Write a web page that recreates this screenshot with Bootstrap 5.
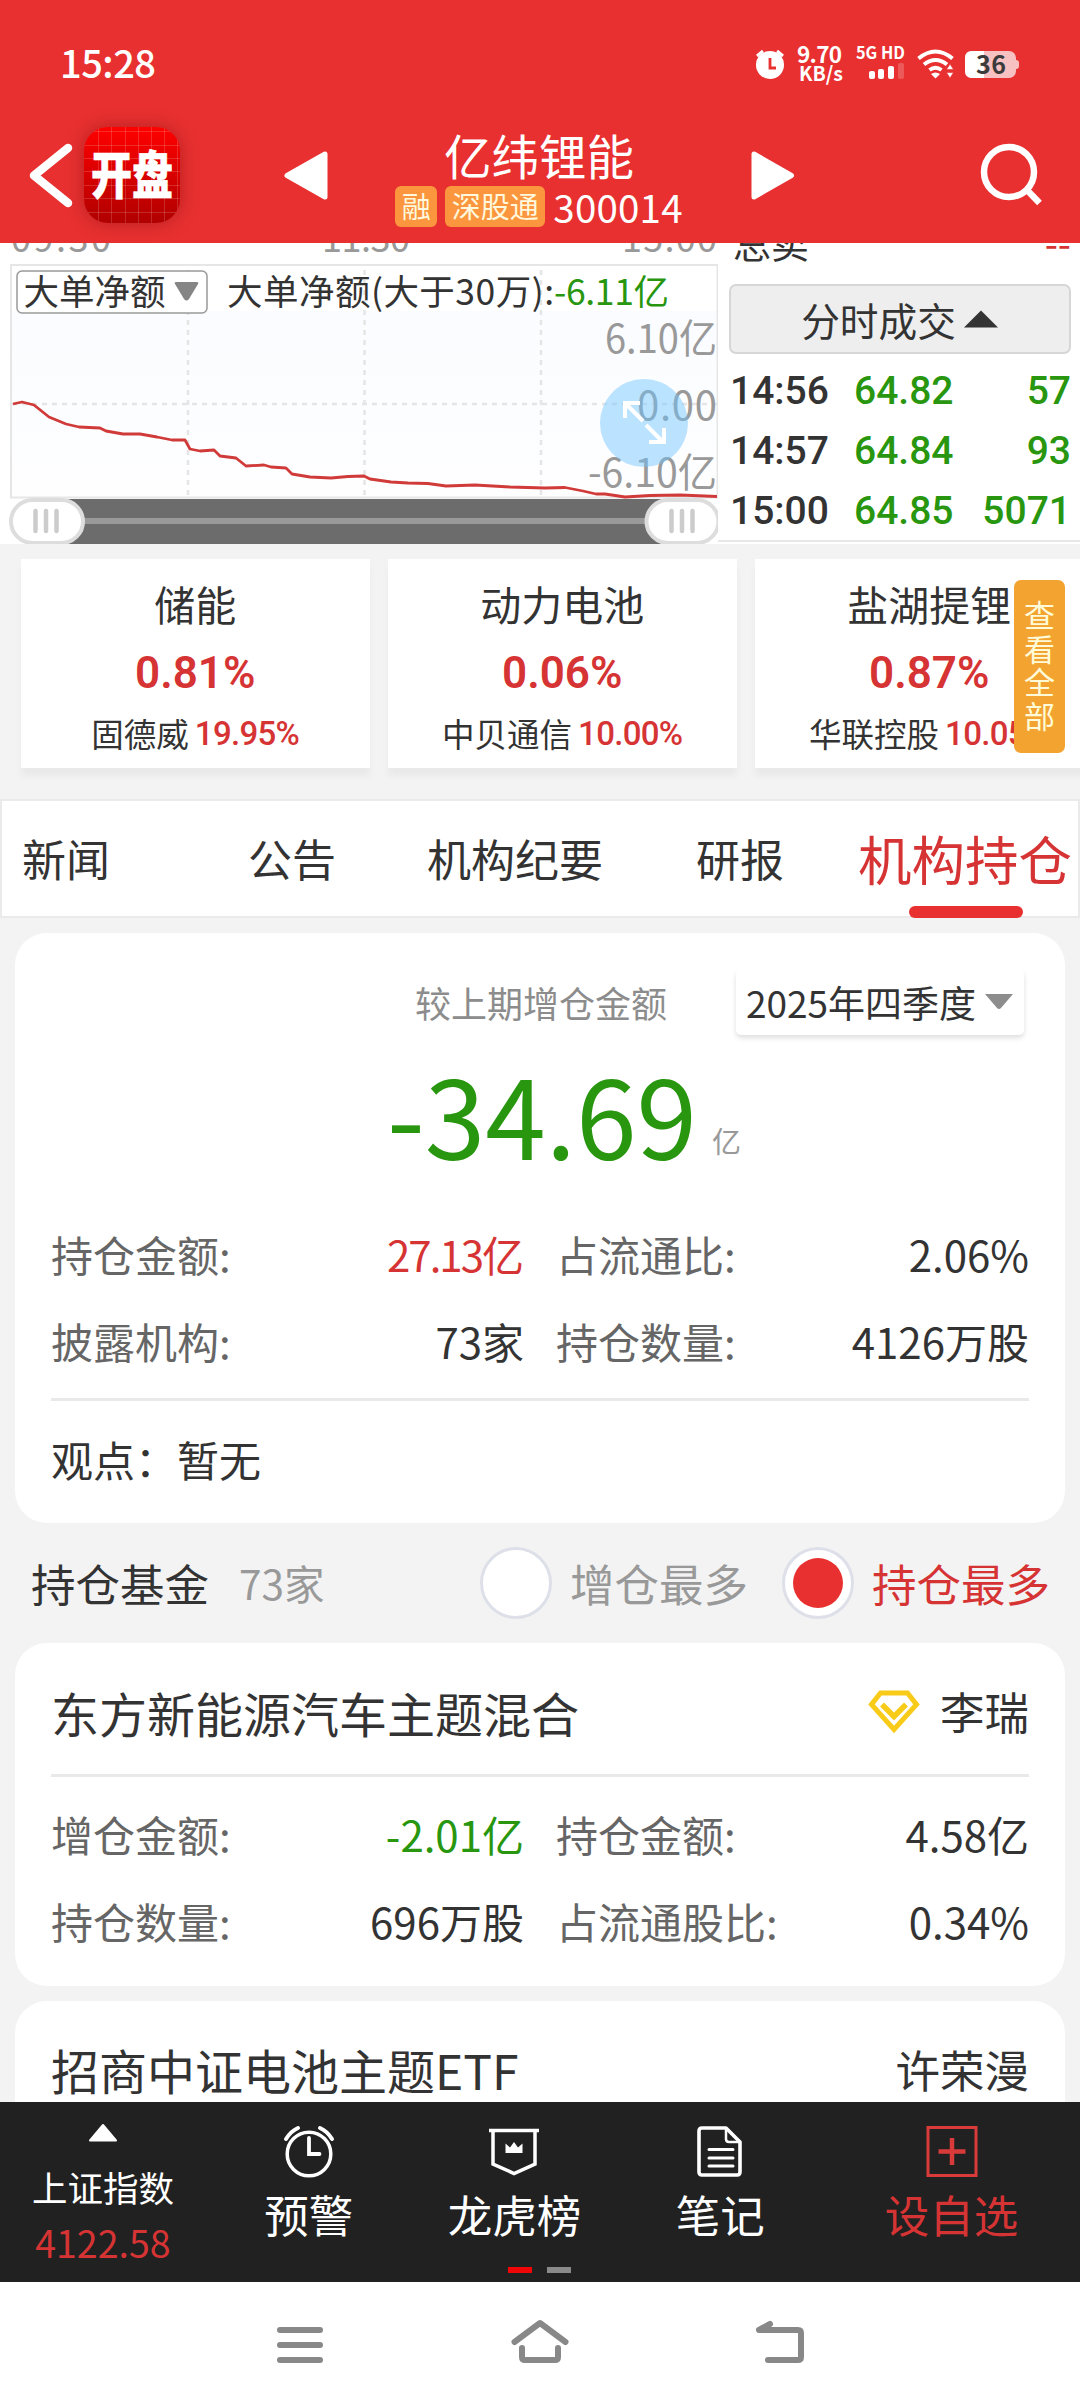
<!DOCTYPE html>
<html lang="zh-CN">
<head>
<meta charset="utf-8">
<meta name="viewport" content="width=device-width, initial-scale=1">
<title>亿纬锂能 300014</title>
<link href="https://cdn.jsdelivr.net/npm/bootstrap@5.3.0/dist/css/bootstrap.min.css" rel="stylesheet">
<style>
:root{--ink:#333;--up:#d63434;--down:#28960f;--brand:#e83030}
body{width:1080px;height:2408px;overflow:hidden;background:#f3f3f3;color:var(--ink);font-family:"Noto Sans CJK SC",sans-serif;line-height:1}
svg{display:block;flex:none}
.din{font-family:Roboto,"Noto Sans CJK SC",sans-serif}
.up{color:var(--up)}.down{color:var(--down)}
.app-head{height:243px;background:var(--brand)}
.status{height:127px;padding:0 60px 0 60px}
.clock{font-family:"Noto Sans CJK SC";font-weight:500;font-size:38px;width:110px;margin-top:-4px;letter-spacing:-.5px}
.titlebar{height:116px}
.app-ico{width:96px;height:96px;border-radius:24px;box-shadow:0 0 18px rgba(90,0,0,.35);background:
 repeating-linear-gradient(90deg,transparent 0 12.2px,rgba(255,255,255,.16) 12.2px 13.2px) 2px 0,
 repeating-linear-gradient(0deg,transparent 0 12.4px,rgba(255,255,255,.16) 12.4px 13.4px) 0 2px,
 linear-gradient(#f00,#e00000 40%,#b00000)}
.app-ico span{font-size:41px;font-weight:900;transform:scaleY(1.24);margin-top:-5px;-webkit-text-stroke:.5px #fff}
.stock-name{font-size:47.5px;height:50px}
.codes{margin-top:5px}
.tag{background:#fb963f;color:#fff8dc;border-radius:6px;height:41px;font-size:29px;padding:0 6.5px 3px}
.code{font-size:38.5px;letter-spacing:.2px}
.quote{height:301px;background:#fff}
.trades{width:362px;height:299px;border-bottom:2px solid #e8e8e8;padding:0 9px 0 11px}
.sell{height:41px;font-size:38px;overflow:hidden}
.sell span{margin-top:-20px}
.fs-btn{height:70px;background:#eee;border:2px solid #d6d6d6;border-radius:7px;font-size:38.7px}
.trade-list{padding-top:7px}
.trade{height:60px;font-size:39px;font-weight:500}
.trade span:first-child{width:121px;padding-left:1px}
.sectors{height:255px;padding:15px 0 0 21px;gap:18.5px;overflow:hidden}
.sector{width:348.5px;height:209px;background:#fff;box-shadow:0 8px 7px rgba(0,0,0,.045);flex:none}
.sector .nm{font-size:41px;margin-top:24px}
.sector .pc{font-size:44px;font-weight:600;margin-top:27px}
.sector .ld{font-size:32.5px;margin-top:22px;gap:6px}
.sector .ld .din{font-size:33px;font-weight:500;letter-spacing:-.7px}
.view-all{right:15px;top:36px;width:51px;height:173px;background:#f3a32f;color:#fffbd8;border-radius:7px;font-size:31px;line-height:33.5px;padding-top:17px;text-align:center}
.tabs{height:119px;background:#fff;border:2px solid #eaeaea;font-size:44px;padding-left:20px}
.tabs span{line-height:114px;white-space:nowrap;flex:none}
.tabs .on{font-size:53.5px;color:var(--up)}
.tabs .on::after{content:"";position:absolute;left:51px;bottom:-2px;width:114px;height:12px;border-radius:6px;background:var(--brand)}
.panel{background:#fff;border-radius:32px;margin:0 15px;padding:0 36px}
.lbl{color:#666}
.kv{font-size:42px;height:87px}
.kv>div{width:473px}
.tight{letter-spacing:-2px}
.line{height:2.5px;background:#e9e9e9}
.period{width:288px;height:66px;font-size:37px;border-radius:5px;box-shadow:0 3px 5px rgba(0,0,0,.13);clip-path:inset(0 -8px -8px -8px)}
.big{font-size:109px;margin-bottom:-5px}
.radio{width:72px;height:72px;border:3px solid #dde0e8;background:#fff}
.radio i{width:50px;height:50px;background:var(--brand)}
.fund-bar{height:120px;font-size:44.5px;padding:0 30px 0 31px}
.fund-name{font-size:48px}
.mgr{font-size:44.5px}
.dock{height:180px;background:#212121;color:#fff;font-size:44.5px}
.dock>div{width:205.8px}
.dock .wide{width:257px}
.sys{height:126px;background:#fff}
</style>
<script src="https://cdn.jsdelivr.net/npm/bootstrap@5.3.0/dist/js/bootstrap.bundle.min.js"></script>
</head>
<body class="d-flex flex-column">
<header class="app-head text-white flex-shrink-0">
  <div class="status d-flex align-items-center">
    <span class="clock">15:28</span>
    <svg class="ms-auto" width="268" height="60" viewBox="753 35 268 60" fill="#fff" font-family="Noto Sans CJK SC" font-weight="700">
      <circle cx="771" cy="66" r="14"/><path d="M758 57l6-5M784 57l-6-5" stroke="#fff" stroke-width="3"/><path d="M771 59v10h6" fill="none" stroke="#e83030" stroke-width="2.8"/>
      <text x="798" y="63.500" font-size="22.500" textLength="45">9.70</text><text x="800" y="82" font-size="20" textLength="44" lengthAdjust="spacingAndGlyphs">KB/s</text>
      <text x="857" y="60" font-size="17" textLength="49" lengthAdjust="spacingAndGlyphs">5G HD</text>
      <rect x="870" y="72" width="6" height="8" rx="2"/><rect x="879" y="70" width="6" height="10" rx="2"/><rect x="889" y="67" width="6" height="13" rx="2"/><rect x="899" y="64" width="6" height="16" rx="2" opacity=".2"/>
      <g fill="none" stroke="#fff" stroke-width="4"><path d="M919.5 59.500q17-14 34 0"/><path d="M925 65.500q11.500-9 23 0"/><path d="M930.500 71q6-4.500 12 0"/></g><path d="M932 75q4.500-3 9 0l-4.500 4.500z"/><path d="M951 65l3.500 5.500h-7zM951 79l3.500-5.500h-7z" stroke="#e83030" stroke-width=".6"/>
      <rect x="966" y="52" width="51" height="27" rx="7" opacity=".7"/><path d="M973 52h12v27h-12q-7 0-7-7v-13q0-7 7-7z"/><path d="M1017 61q3 0 3 3v3q0 3-3 3z" opacity=".7"/>
      <text x="977" y="75" font-size="25" fill="#3b3b3b" textLength="30">36</text>
    </svg>
  </div>
  <div class="titlebar d-flex align-items-start">
    <svg width="84" height="96" viewBox="0 127 84 96"><path d="M68 148L34 175.500L68 203" fill="none" stroke="#fff" stroke-width="8.500" stroke-linecap="round" stroke-linejoin="round"/></svg>
    <div class="app-ico d-flex align-items-center justify-content-center"><span>开盘</span></div>
    <svg width="160" height="96" viewBox="180 127 160 96"><path d="M287 175.500L325 154v43z" fill="#fff" stroke="#fff" stroke-width="5" stroke-linejoin="round"/></svg>
    <div class="d-flex flex-column align-items-center" style="width:398px">
      <div class="stock-name mt-1">亿纬锂能</div>
      <div class="codes d-flex align-items-center"><span class="tag d-flex align-items-center">融</span><span class="tag d-flex align-items-center ms-2 me-2">深股通</span><span class="code">300014</span></div>
    </div>
    <svg width="342" height="96" viewBox="738 127 342 96"><path d="M791.500 175.500L754 154v43z" fill="#fff" stroke="#fff" stroke-width="5" stroke-linejoin="round"/><g fill="none" stroke="#fff" stroke-width="6.500"><circle cx="1009" cy="172" r="25"/><path d="M1027 190l12.500 13"/></g></svg>
  </div>
</header>

<section class="quote d-flex flex-shrink-0">
  <svg width="718" height="301" viewBox="0 243 718 301" font-family="Noto Sans CJK SC">
    <defs><linearGradient id="fade" x1="0" y1="0" x2="0" y2="1"><stop offset="0" stop-color="#fafcff"/><stop offset="1" stop-color="#fefeff"/></linearGradient></defs>
    <g font-size="36" fill="#999"><text x="11" y="252" textLength="100">09:30</text><text x="322" y="252" textLength="88">11:30</text><text x="622" y="252" textLength="95">15:00</text></g>
    <rect x="11" y="311" width="706" height="186" fill="url(#fade)"/>
    <rect x="11" y="265" width="706.500" height="232.500" fill="none" stroke="#e6e6e6" stroke-width="2"/>
    <g stroke="#e5e5e5" stroke-width="2.500" stroke-dasharray="5 5"><path d="M188 270v226M364.500 270v226M541 270v226M12 404h705"/></g>
    <rect x="17" y="271" width="190" height="42" rx="5" fill="#fff" stroke="#999" stroke-width="1.500"/>
    <g font-size="35.500" fill="#333"><text x="23.500" y="304.500">大单净额</text><text x="227" y="304.500" textLength="327">大单净额(大于30万):</text><text x="554" y="304.500" fill="#28960f" textLength="115">-6.11亿</text></g>
    <path d="M176 282h21q2 0 1 2l-9 15q-2.500 3-5 0l-9-15q-1-2 1-2z" fill="#858585"/>
    <g font-size="40" fill="#999"><text x="605" y="353" textLength="112" lengthAdjust="spacingAndGlyphs">6.10亿</text><text x="637" y="420" textLength="80">0.00</text><text x="588" y="487" textLength="129" lengthAdjust="spacingAndGlyphs">-6.10亿</text></g>
    <path fill="none" stroke="#d03a38" stroke-width="2.800" stroke-linejoin="round" d="M13 404L22 402L34 405L49 417L66 424L79 427L100 428L106 431L123 434L140 434L157 437L172 440L185 440L190 449L200 451L214 450L220 456L236 458L246 466L264 465L271 467L286 468L292 474L310 477L331 478L348 476.500L364 476L370 479L391 482L408 483L428 483.500L446 486L475 485L510 487L545 488L565 487.500L583 491L596 494L605 494L625 497L650 495.500L680 495L717 496.500"/>
    <circle cx="644" cy="423" r="44" fill="#6cc5ff" fill-opacity=".46"/>
    <g fill="none" stroke="#fff" stroke-width="4"><path d="M643 421l-17-17M625 418v-15h15M646 425l17 17M664 428v14h-15"/></g>
    <path d="M45 499h635v45H45z" fill="#6c6c6c"/><path d="M80 521h570" stroke="#999" stroke-width="6"/>
    <g fill="#fff" stroke="#ddd" stroke-width="4"><rect x="11" y="500" width="72" height="43" rx="21.500"/><rect x="646.500" y="500" width="72" height="43" rx="21.500"/></g>
    <path d="M35.500 511v20M46 511v20M56.500 511v20M671.500 511v20M682 511v20M692.500 511v20" stroke="#ccc" stroke-width="4.500" stroke-linecap="round"/>
  </svg>
  <div class="trades">
    <div class="sell d-flex justify-content-between"><span class="ps-1">总卖</span><span class="up">--</span></div>
    <div class="fs-btn d-flex align-items-center justify-content-center">分时成交<svg class="ms-2" width="35" height="18"><path d="M0 17.500L17 .5L34 17.500z" fill="#333"/></svg></div>
    <div class="trade-list">
      <div class="trade din d-flex align-items-center"><span>14:56</span><span class="down ps-1">64.82</span><span class="down ms-auto">57</span></div>
      <div class="trade din d-flex align-items-center"><span>14:57</span><span class="down ps-1">64.84</span><span class="down ms-auto">93</span></div>
      <div class="trade din d-flex align-items-center"><span>15:00</span><span class="down ps-1">64.85</span><span class="down ms-auto">5071</span></div>
    </div>
  </div>
</section>

<section class="sectors d-flex position-relative flex-shrink-0">
  <div class="sector d-flex flex-column align-items-center"><div class="nm">储能</div><div class="pc din up">0.81%</div><div class="ld d-flex align-items-center">固德威<span class="din up">19.95%</span></div></div>
  <div class="sector d-flex flex-column align-items-center"><div class="nm">动力电池</div><div class="pc din up">0.06%</div><div class="ld d-flex align-items-center">中贝通信<span class="din up">10.00%</span></div></div>
  <div class="sector d-flex flex-column align-items-center"><div class="nm">盐湖提锂</div><div class="pc din up">0.87%</div><div class="ld d-flex align-items-center">华联控股<span class="din up">10.05%</span></div></div>
  <div class="view-all position-absolute">查<br>看<br>全<br>部</div>
</section>

<nav class="tabs d-flex flex-shrink-0">
  <span>新闻</span><span style="margin-left:138px">公告</span><span style="margin-left:91px">机构纪要</span><span style="margin-left:93px">研报</span><span class="on position-relative" style="margin-left:74px">机构持仓</span>
</nav>

<section class="panel flex-shrink-0" style="margin-top:15px;height:590px">
  <div class="d-flex align-items-center justify-content-end" style="padding:36px 5px 0 0;color:#8c8c8c;font-size:36px">
    <span style="margin-right:69px">较上期增仓金额</span>
    <div class="period d-flex align-items-center justify-content-center text-nowrap" style="color:#333">2025年四季度<svg class="ms-2" width="30" height="18"><path d="M1 1h28L17 15q-2 2-4 0z" fill="#8d8d8d"/></svg></div>
  </div>
  <div class="d-flex align-items-end" style="height:127px;padding-left:336px"><span class="big down">-34.69</span><span style="font-size:29px;color:#999;margin:0 0 7px 15px">亿</span></div>
  <div style="padding-top:48px">
    <div class="kv d-flex justify-content-between align-items-center"><div class="d-flex justify-content-between"><span class="lbl">持仓金额:</span><span class="up"><span class="tight">27.13</span>亿</span></div><div class="d-flex justify-content-between"><span class="lbl">占流通比:</span><span>2.06%</span></div></div>
    <div class="kv d-flex justify-content-between align-items-center"><div class="d-flex justify-content-between"><span class="lbl">披露机构:</span><span>73家</span></div><div class="d-flex justify-content-between"><span class="lbl">持仓数量:</span><span>4126万股</span></div></div>
  </div>
  <div class="line" style="margin-top:14px"></div>
  <div style="font-size:42px;padding-top:37px">观点：暂无</div>
</section>

<section class="fund-bar d-flex align-items-center flex-shrink-0">
  <span>持仓基金</span><span style="font-size:40.500px;color:#999;margin-left:30px">73家</span>
  <span class="radio rounded-circle ms-auto"></span><span style="color:#999;margin:0 34px 0 18px">增仓最多</span>
  <span class="radio rounded-circle d-flex align-items-center justify-content-center"><i class="rounded-circle"></i></span><span class="up" style="margin-left:18px">持仓最多</span>
</section>

<section class="panel flex-shrink-0" style="height:343px">
  <div class="d-flex align-items-center" style="height:131px;padding-top:6px"><span class="fund-name">东方新能源汽车主题混合</span>
    <svg class="ms-auto" width="52" height="44" viewBox="0 0 52 44" fill="none" stroke="#f8cb18"><path d="M12.500 3H39.500L48.500 14.500L26 39.500L3.500 14.500z" stroke-width="5"/><path d="M14 14.500L26 26.500L38 14.500" stroke-width="5.500"/></svg>
    <span class="mgr" style="margin-left:20px">李瑞</span></div>
  <div class="line"></div>
  <div style="padding-top:14px">
    <div class="kv d-flex justify-content-between align-items-center"><div class="d-flex justify-content-between"><span class="lbl">增仓金额:</span><span class="down">-2.01亿</span></div><div class="d-flex justify-content-between"><span class="lbl">持仓金额:</span><span>4.58亿</span></div></div>
    <div class="kv d-flex justify-content-between align-items-center"><div class="d-flex justify-content-between"><span class="lbl">持仓数量:</span><span>696万股</span></div><div class="d-flex justify-content-between"><span class="lbl">占流通股比:</span><span>0.34%</span></div></div>
  </div>
</section>

<section class="panel flex-shrink-0 rounded-bottom-0" style="height:101px;margin-top:15px;overflow:hidden">
  <div class="d-flex align-items-center justify-content-between" style="height:131px;padding-top:5px"><span class="fund-name">招商中证电池主题ETF</span><span class="mgr">许荣漫</span></div>
</section>

<footer class="dock d-flex position-relative flex-shrink-0">
  <div class="d-flex flex-column align-items-center" style="padding-top:21px;font-size:35.500px"><svg width="30" height="19"><path d="M2 17.500L15 2L28 17.500z" fill="#fff" stroke="#fff" stroke-width="2" stroke-linejoin="round"/></svg><span style="margin-top:27px">上证指数</span><span class="up" style="font-size:37.500px;margin-top:18px">4122.58</span></div>
  <div class="d-flex flex-column align-items-center" style="padding-top:22px"><svg width="52" height="54" viewBox="0 0 52 54" fill="none" stroke="#fff" stroke-linecap="round"><circle cx="26" cy="30" r="21.800" stroke-width="3.500"/><path d="M26 14v16h10.500" stroke-width="3.800"/><path d="M3 15Q8 7 15 4M49 15Q44 7 37 4" stroke-width="4"/></svg><span style="margin-top:14px">预警</span></div>
  <div class="d-flex flex-column align-items-center" style="padding-top:22px"><svg width="52" height="54" viewBox="0 0 52 54" fill="none" stroke="#fff" stroke-width="3.500"><path d="M1 6.500H51M5 7v33l21 9.500L47 40V7"/><path d="M17.500 29v-9.500l4.500 4 4-5.500 4 5.500 4.500-4V29z" fill="#fff" stroke="none"/></svg><span style="margin-top:14px">龙虎榜</span></div>
  <div class="d-flex flex-column align-items-center" style="padding-top:22px"><svg width="52" height="54" viewBox="0 0 52 54" fill="none" stroke="#fff" stroke-width="3.600" stroke-linejoin="round"><path d="M8 4H32L46 18V48q0 3-3 3H8q-3 0-3-3V7q0-3 3-3z"/><path d="M32 5v10q0 3 3 3h10" stroke-width="2.500"/><path d="M15 25.500h24M15 34h24M15 42h24" stroke-width="3" stroke-linecap="round"/></svg><span style="margin-top:14px">笔记</span></div>
  <div class="wide up d-flex flex-column align-items-center" style="padding-top:22px"><svg width="52" height="54" viewBox="0 0 52 54" fill="none" stroke="#d93a3a"><rect x="2" y="3.500" width="48" height="48" stroke-width="3"/><path d="M26 14v27M12.500 27.500h27" stroke-width="4.500"/></svg><span style="margin-top:14px">设自选</span></div>
  <svg class="position-absolute" style="left:508px;top:165px" width="64" height="6"><path d="M0 3h24" stroke="#f00606" stroke-width="6"/><path d="M39 3h24" stroke="#8a8a8a" stroke-width="6"/></svg>
</footer>
<footer class="sys flex-shrink-0">
  <svg width="1080" height="126" viewBox="0 2282 1080 126" fill="none" stroke="#888" stroke-width="6" stroke-linecap="round" stroke-linejoin="round"><path d="M280 2330h40M280 2345h40M280 2360h40M514.500 2342L540 2323L565.500 2342M522 2348v9q0 3 3 3h30q3 0 3-3v-9M770 2324L759 2330H798q3 0 3 3v24q0 3-3 3H768"/></svg>
</footer>
</body>
</html>
